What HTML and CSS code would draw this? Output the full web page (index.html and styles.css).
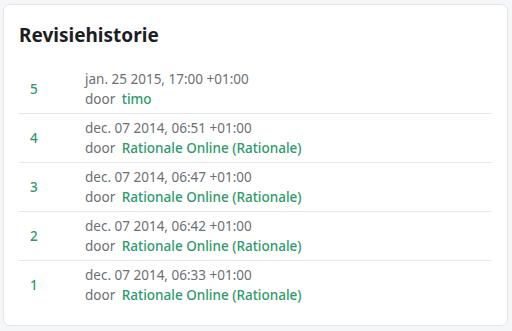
FILE: index.html
```html
<!DOCTYPE html>
<html lang="nl">
<head>
    <meta charset="UTF-8">
    <title>Revisiehistorie</title>
    <link rel="stylesheet" href="styles.css">
</head>
<body>
    <div class="card">
        <h2 class="card-title">Revisiehistorie</h2>
        <table class="revisions">
            <tbody>
                <tr>
                    <td class="rev">5</td>
                    <td>
                        <div class="date">jan. 25 2015, 17:00 +01:00</div>
                        <div class="author">door <a href="#">timo</a></div>
                    </td>
                </tr>
                <tr>
                    <td class="rev">4</td>
                    <td>
                        <div class="date">dec. 07 2014, 06:51 +01:00</div>
                        <div class="author">door <a href="#">Rationale Online (Rationale)</a></div>
                    </td>
                </tr>
                <tr>
                    <td class="rev">3</td>
                    <td>
                        <div class="date">dec. 07 2014, 06:47 +01:00</div>
                        <div class="author">door <a href="#">Rationale Online (Rationale)</a></div>
                    </td>
                </tr>
                <tr>
                    <td class="rev">2</td>
                    <td>
                        <div class="date">dec. 07 2014, 06:42 +01:00</div>
                        <div class="author">door <a href="#">Rationale Online (Rationale)</a></div>
                    </td>
                </tr>
                <tr>
                    <td class="rev">1</td>
                    <td>
                        <div class="date">dec. 07 2014, 06:33 +01:00</div>
                        <div class="author">door <a href="#">Rationale Online (Rationale)</a></div>
                    </td>
                </tr>
            </tbody>
        </table>
    </div>
</body>
</html>
```

FILE: styles.css
```css
body {
    margin: 0;
    padding: 4px 4px 0 3px;
    background-color: #f5f6f8;
    font-family: "Noto Sans", Arial, sans-serif;
    color: #1b1e22;
}

.card {
    background-color: #fff;
    border: 1px solid #e3e5e8;
    border-radius: 7px;
    padding: 16px 15px 20px 15px;
    height: 322px;
    box-sizing: border-box;
}

.card-title {
    margin: 0 0 16px 0;
    font-size: 19px;
    font-weight: bold;
    line-height: 28px;
}

.revisions {
    width: 100%;
    border-collapse: collapse;
}

.revisions td {
    padding: 4px 0;
    border-bottom: 1px solid #e5e7ea;
    font-size: 13.5px;
    line-height: 20px;
    vertical-align: middle;
}

.revisions tr:last-child td {
    border-bottom: none;
}

.revisions td.rev {
    width: 55px;
    padding-left: 11px;
    color: #2e9a6b;
    font-weight: 500;
}

.date, .author {
    color: #6c7075;
}

.author a {
    margin-left: 3px;
    color: #2e9a6b;
    font-weight: 500;
    text-decoration: none;
}
```
